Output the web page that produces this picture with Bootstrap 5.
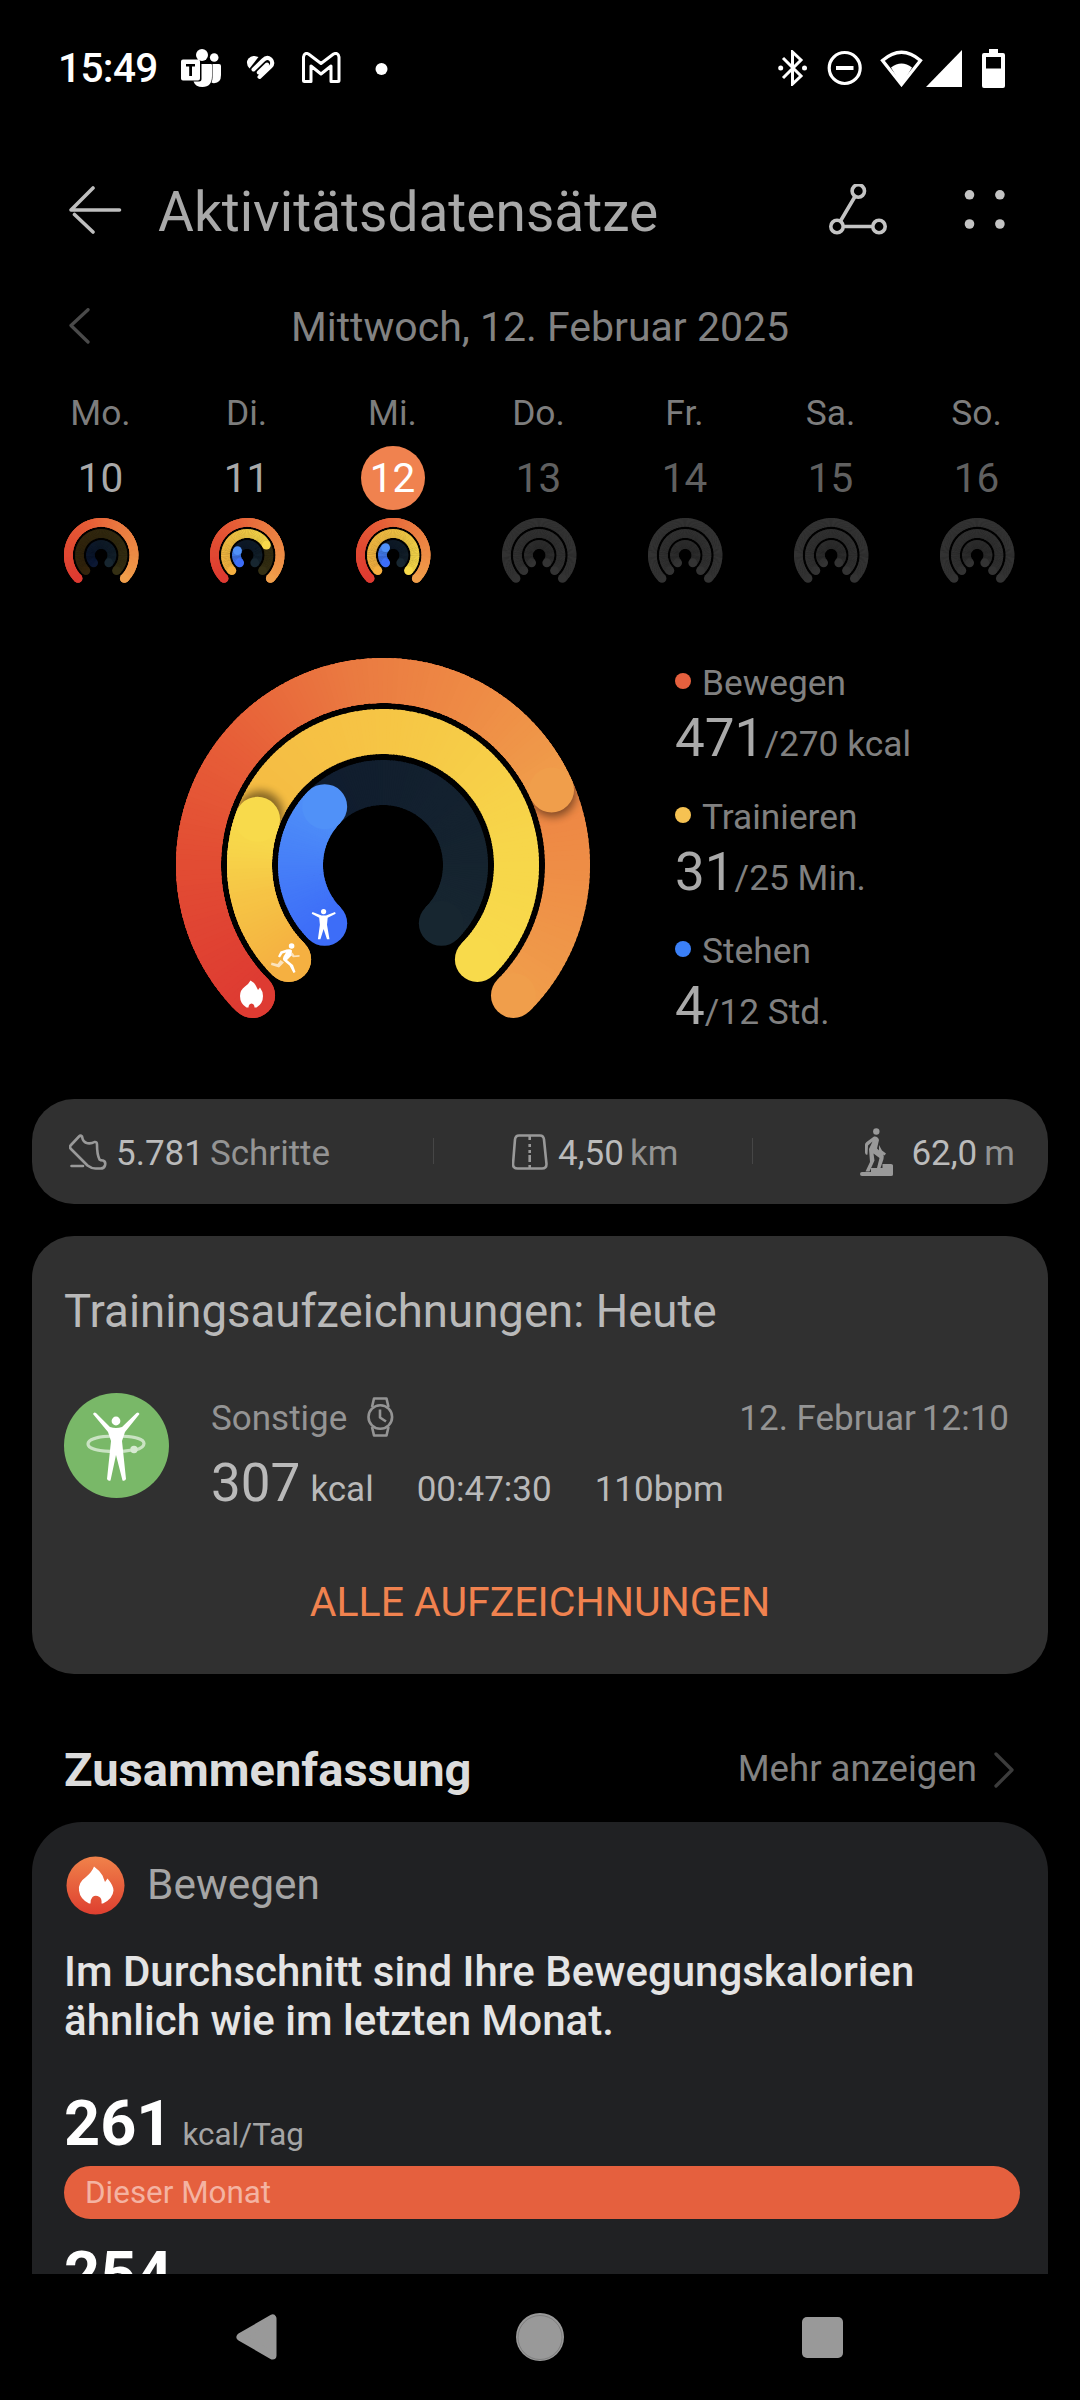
<!DOCTYPE html>
<html lang="de">
<head>
<meta charset="utf-8">
<meta name="viewport" content="width=device-width, initial-scale=1">
<title>Aktivitätsdatensätze</title>
<link rel="stylesheet" href="https://cdn.jsdelivr.net/npm/bootstrap@5.3.0/dist/css/bootstrap.min.css">
<style>
  body { background:#000; color:#aaa; font-family:Roboto,"Noto Sans",sans-serif; height:2400px; overflow:hidden; font-size:35px; line-height:1; }
  svg { display:block; flex:none; }
  .statusbar { height:136px; padding-left:58px; padding-right:75px; }
  .clock { font-size:40.5px; font-weight:500; color:#fff; width:123px; letter-spacing:-.6px; white-space:nowrap; }
  .topbar { height:148px; padding-left:68px; padding-right:67px; }
  .topbar h1 { font-size:55px; font-weight:400; line-height:70px; color:#a9a9a9; margin:3px 0 0 36px; }
  .datebar { height:85px; padding-left:69px; padding-right:69px; }
  .datebar span { font-size:41px; color:#828282; margin-top:1px; }
  .week { margin-top:21px; padding-left:28px; padding-right:30px; }
  .weekday { height:46px; line-height:46px; font-size:35.4px; color:#7d7d7d; margin-right:1px; }
  .daynum { width:64px; height:64px; line-height:65px; font-size:40.5px; margin:10px 1px 8px 0; color:#a9a9a9; text-align:center; }
  .daynum.future { color:#606060; }
  .daynum.today { background:#f0824f; color:#fff; }
  .summary-rings { height:441px; margin-top:74px; padding-left:176px; }
  .legend { margin-left:85px; padding-top:5px; color:#808080; font-size:35.3px; }
  .legend-item { height:134px; }
  .legend-name { line-height:41px; height:40px; gap:11px; }
  .bullet { width:16px; height:16px; margin-top:-4px; }
  .legend-value { line-height:66px; margin-top:2px; white-space:nowrap; }
  .big-num { font-size:53px; color:#aaa; }
  .panel { background:#303030; border-radius:42px; margin:0 32px; }
  .stats { height:105px; color:#949494; }
  .stats b { font-weight:400; color:#bbb; }
  .stats span, .stats b { line-height:44px; margin-top:4px; }
  .stat-steps { width:401px; padding-left:37px; }
  .stat-dist { width:319px; padding-left:78px; }
  .stat-climb { padding-right:33px; }
  .rule { width:1px; height:26px; background:#464646; margin-top:-1px; }
  .records { height:438px; margin-top:32px; padding:46px 32px 0; }
  .records h2 { font-size:45.6px; font-weight:400; line-height:60px; color:#b9b9b9; margin:0 0 51px; }
  .rec-line { height:44px; line-height:44px; margin-top:4px; color:#949494; padding-right:7px; }
  .rec-values { height:66px; line-height:66px; margin-top:9px; color:#b9b9b9; white-space:nowrap; }
  .rec-values .big-num { color:#b9b9b9; }
  .all-link { font-size:41px; line-height:60px; color:#f0824f; margin-top:56px; text-decoration:none; }
  .section-head { height:148px; padding:43px 64px 0; }
  .section-head h2 { font-size:47.1px; font-weight:700; line-height:60px; color:#dcdcdc; margin:0; }
  .more { font-size:36.6px; color:#828282; }
  .move-card { background:#202123; height:452px; border-radius:50px 50px 0 0; margin:0 32px; padding:34px 28px 0 32px; overflow:hidden; }
  .move-title { font-size:42.4px; color:#a5a5a5; margin-left:22px; }
  .move-text { font-size:42px; font-weight:500; line-height:49px; color:#e4e4e4; margin:32px 0 44px; white-space:nowrap; }
  .avg { height:70px; line-height:70px; color:#a5a5a5; font-size:31.4px; }
  .avg strong { font-size:63px; font-weight:700; color:#fff; }
  .month-bar { height:53px; line-height:54px; background:#e5603e; color:#f4b3a2; font-size:31.4px; margin:7px 0 21px; padding-left:21px; border-radius:27px; }
  .navkeys { height:126px; padding-left:236px; padding-right:237px; }
</style>
</head>
<body>
<header class="statusbar d-flex align-items-center">
  <div class="clock">15:49</div>
  <svg width="40" height="40" viewBox="0 0 40 40" fill="#fff"><circle cx="21" cy="7" r="6"/><circle cx="33.2" cy="9.5" r="4.3"/><path d="M31.500 16h6.500q2 0 2 2v9q0 8-7 8.200-1.500 0-2.500-.6 1-2 1-5z"/><path d="M20.500 16h9.500q1 0 1 1v11q0 11-9.500 11-7 0-9-5.500h5.500q2.500 0 2.500-2.500z"/><path fill-rule="evenodd" d="M2 11.500h15q2 0 2 2v17q0 2-2 2H2q-2 0-2-2v-17q0-2 2-2zM5 16v2.600h3.200V28h2.800v-9.400h3V16z"/></svg>
  <svg style="margin-left:25px" width="31" height="28" viewBox="0 0 31 28"><path fill="#fff" d="M3.500 14.500q-4.500-5.500-1-10Q5 1.500 8.500 2l4 1z"/><path d="M7.500 15.500L17 6.200q4-4 7.500-1 3.500 3.800 0 7.500L13.500 23M12.800 18.500L21 10.500" fill="none" stroke="#fff" stroke-width="4" stroke-linecap="round"/></svg>
  <svg style="margin-left:25px" width="39" height="32" viewBox="0 0 39 32" fill="none" stroke="#fff" stroke-width="3" stroke-linejoin="round"><path d="M1.500 28.500V5q1-5 5-3L19 11.500 31.500 2q4.500-2 5.500 3v23.500q0 1-1 1h-7V14L19 22 9 14v15.500H2.500q-1 0-1-1z"/></svg>
  <svg style="margin-left:34px" width="13" height="13"><circle cx="6.500" cy="7" r="6" fill="#fff"/></svg>
  <div class="d-flex align-items-center ms-auto">
    <svg width="30" height="36" viewBox="0 0 30 36"><path d="M5 8l18 18-8.500 8V2L23 10 5 28" fill="none" stroke="#fff" stroke-width="3"/><circle cx="2.700" cy="18" r="2.500" fill="#fff"/><circle cx="26.500" cy="18" r="2.500" fill="#fff"/></svg>
    <svg style="margin-left:19px" width="36" height="36" fill="none" stroke="#fff"><circle cx="17.700" cy="18" r="15.500" stroke-width="3.200"/><path d="M9 18h17.500" stroke-width="4"/></svg>
    <svg style="margin-left:17px" width="44" height="38" viewBox="0 0 44 38"><path d="M2.500 11.500Q21.500-5 40.500 11.500L21.500 35.500z" fill="none" stroke="#fff" stroke-width="3.300"/><path d="M11 18.500q10.500-8 21 0L21.500 36z" fill="#fff"/></svg>
    <svg style="margin-left:2px" width="37" height="37"><path d="M36 0v37H0z" fill="#fff"/></svg>
    <svg style="margin-left:19px" width="23" height="39"><path fill="#fff" fill-rule="evenodd" d="M7 0h9v4h5q2 0 2 2v31q0 2-2 2H2q-2 0-2-2V6q0-2 2-2h5zM4 8v11.500h15V8z"/></svg>
  </div>
</header>

<nav class="topbar d-flex align-items-center">
  <svg width="54" height="48" viewBox="0 0 54 48" fill="none" stroke="#bebebe" stroke-width="3.600" stroke-linecap="round" stroke-linejoin="round"><path d="M51.500 24H3L25 2M6.500 28.500L25 46"/></svg>
  <h1>Aktivitätsdatensätze</h1>
  <svg class="ms-auto" width="58" height="52" viewBox="828.500 184 58 52" fill="none" stroke="#c4c4c4" stroke-width="3.600"><circle cx="857.800" cy="191" r="6.200"/><circle cx="836.500" cy="226.500" r="6.200"/><circle cx="878.500" cy="226.500" r="6.200"/><path d="M854.500 196.500L840 221M843 226.500h29"/></svg>
  <svg style="margin-left:77px" width="49" height="40" viewBox="963.500 190 49 40" fill="#c4c4c4"><circle cx="969" cy="194.800" r="4.800"/><circle cx="999.400" cy="194.800" r="4.800"/><circle cx="969" cy="224" r="4.800"/><circle cx="999.400" cy="224" r="4.800"/></svg>
</nav>

<div class="datebar d-flex align-items-center justify-content-between">
  <svg width="21" height="38" fill="none" stroke="#4a4a4a" stroke-width="3.300" stroke-linecap="round" stroke-linejoin="round"><path d="M19 1.700L2 17.500 19 34"/></svg>
  <span>Mittwoch, 12. Februar 2025</span>
  <svg width="21" height="38"></svg>
</div>

<div class="week d-flex">
  <div class="col d-flex flex-column align-items-center"><div class="weekday">Mo.</div><div class="daynum">10</div><svg class="mini" width="75" height="66" data-p="1,0,0"></svg></div>
  <div class="col d-flex flex-column align-items-center"><div class="weekday">Di.</div><div class="daynum">11</div><svg class="mini" width="75" height="66" data-p="1,.73,.26"></svg></div>
  <div class="col d-flex flex-column align-items-center"><div class="weekday">Mi.</div><div class="daynum today rounded-circle">12</div><svg class="mini" width="75" height="66" data-p="1,1,.333"></svg></div>
  <div class="col d-flex flex-column align-items-center"><div class="weekday">Do.</div><div class="daynum future">13</div><svg class="mini" width="75" height="66"></svg></div>
  <div class="col d-flex flex-column align-items-center"><div class="weekday">Fr.</div><div class="daynum future">14</div><svg class="mini" width="75" height="66"></svg></div>
  <div class="col d-flex flex-column align-items-center"><div class="weekday">Sa.</div><div class="daynum future">15</div><svg class="mini" width="75" height="66"></svg></div>
  <div class="col d-flex flex-column align-items-center"><div class="weekday">So.</div><div class="daynum future">16</div><svg class="mini" width="75" height="66"></svg></div>
</div>

<section class="summary-rings d-flex align-items-start">
  <svg id="rings" width="414" height="362" viewBox="176 658 414 362">
    <defs>
      <filter id="soft" x="-50%" y="-50%" width="200%" height="200%"><feGaussianBlur stdDeviation="4.500"/></filter>
      <clipPath id="clip0"><path clip-rule="evenodd" d="M176 865a207 207 0 1 1 414 0a207 207 0 1 1-414 0zM221 865a162 162 0 1 0 324 0a162 162 0 1 0-324 0z"/></clipPath>
      <clipPath id="clip1"><path clip-rule="evenodd" d="M227 865a156 156 0 1 1 312 0a156 156 0 1 1-312 0zM272 865a111 111 0 1 0 222 0a111 111 0 1 0-222 0z"/></clipPath>
    </defs>
    <g id="arcs"></g>
    <g fill="#fff">
      <path d="M250.500 980.500q4 2 5.500 5.500l2 4 2-2.500q3 4 3 8.500 0 7.500-6.500 11.500h-2q0-3.500-3-4-3 .5-3 4h-2q-6.500-4-6.500-11.500 0-6 5-9.500 4-3 5.500-6z"/>
      <circle cx="291.600" cy="946" r="2.800"/>
      <path d="M286.500 949.500q4-1 5.500 1l-.5 5-4.500 4.500 6 5 2.500 7-2 1-4-7.500-6-5q-1-2 0-4l2.500-4-3.500 1-2.500 4-2-1 2.500-5z"/>
      <path opacity=".65" d="M292.500 952.500l2 3 5-.500v1.800l-6.500.5-2-2zM280.500 960l3.500 2.500-5 5-8-2.500.500-2.500 6 1.500z"/>
      <circle cx="323.600" cy="911.600" r="2.600"/>
      <path d="M312.500 912l9 3.500h4.500l9-3.500.7 1.800-8 4-.7 7 2.500 14.500h-2.500L323.600 929l-3.200 10.300h-2.500l2-14.500-.7-7-7.500-4z"/>
    </g>
  </svg>
  <div class="legend">
    <div class="legend-item"><div class="legend-name d-flex align-items-center"><i class="bullet rounded-circle" style="background:#e5603e"></i>Bewegen</div><div class="legend-value"><span class="big-num">471</span>/270 kcal</div></div>
    <div class="legend-item"><div class="legend-name d-flex align-items-center"><i class="bullet rounded-circle" style="background:#f6c252"></i>Trainieren</div><div class="legend-value"><span class="big-num">31</span>/25 Min.</div></div>
    <div class="legend-item"><div class="legend-name d-flex align-items-center"><i class="bullet rounded-circle" style="background:#3b80f7"></i>Stehen</div><div class="legend-value"><span class="big-num">4</span>/12 Std.</div></div>
  </div>
</section>

<section class="panel stats d-flex align-items-center">
  <div class="stat-steps d-flex align-items-center">
    <svg width="38" height="36" viewBox="0 0 38 36" fill="none" stroke="#999" stroke-width="2.600" stroke-linecap="round" stroke-linejoin="round"><path d="M10 2.500Q11.500 1 13 2.500q1 6 5.500 6.700 4 .6 7-1.200 2.500-.5 2.500 2.500 0 10 2.500 15 1 1 3.500 1 3 1 2 5-1 3-4.500 3h-5q-4 0-8-3L2 15q-2-2 0-4zM2.500 32H14"/></svg>
    <b style="margin-left:9px">5.781</b><span style="margin-left:6px">Schritte</span>
  </div>
  <div class="rule"></div>
  <div class="stat-dist d-flex align-items-center">
    <svg width="36" height="36" viewBox="0 0 36 36" fill="none" stroke="#999" stroke-width="2.600"><path d="M7 1.500h21q3.500 0 4 4L34.500 30q0 4.500-4.500 4.500H5.500Q1 34.500 1 30L3 5.500q.5-4 4-4z"/><path d="M17.700 2v4M17.700 10v3M17.700 16v3M17.700 21v7M17.700 31v4" /></svg>
    <b style="margin-left:10px">4,50</b><span style="margin-left:6px">km</span>
  </div>
  <div class="rule" style="margin-left:-1px"></div>
  <div class="stat-climb d-flex align-items-center ms-auto">
    <svg width="34" height="48" viewBox="0 0 34 48" fill="#999"><circle cx="16.300" cy="3.500" r="3.200"/><path d="M14 8.500q4-.5 5 3.500l-2 8.500 6 5.500q1.500 2 .5 5L20.500 40H17l2.500-10-6-4.500 1 7-5 11h-4L10 34l-1-13 3.500-7.500-4.500 4-.5 9q-2 1-2.500-2v-8q0-1.500 1.500-2.500zM19 17l3 5.500 4 3-1.500 2-5.500-4z"/><path d="M2 44h9v-4h11.500v-4H31q2 0 2 1.500v9q0 1.500-2 1.500H2q-2 0-2-2t2-2z"/></svg>
    <b style="margin-left:17px">62,0</b><span style="margin-left:7px">m</span>
  </div>
</section>

<section class="panel records">
  <h2>Trainingsaufzeichnungen: Heute</h2>
  <div class="d-flex align-items-start">
    <svg width="105" height="105"><circle cx="52.500" cy="52.500" r="52.500" fill="#79b868"/><path d="M71 57q9-2 9-6.500C80 45 67 43 52 43s-28 2.500-28 8 13 7.500 28 7.500q9 0 16-1.500" fill="none" stroke="#fff" stroke-opacity=".6" stroke-width="3.200"/><circle cx="70" cy="56.500" r="3.700" fill="#d7ead2"/><g fill="#fff"><circle cx="52" cy="28" r="4.400"/><path d="M29 21q1-2.500 3-1l14 14q6 2 12 0l14.500-14q2-1.500 3 1L61 39l-3 9 4 38q-1 2.500-3.500 1.500L52 62l-5.500 25.500Q44 88.500 43 86l4-38-3-9z"/></g></svg>
    <div class="flex-grow-1" style="margin-left:42px">
      <div class="rec-line d-flex align-items-center"><span>Sonstige</span>
        <svg style="margin-left:20px;margin-top:-4px" width="27" height="40" fill="none" stroke="#949494" stroke-width="2.600" stroke-linejoin="round"><circle cx="13.300" cy="20" r="11.800"/><path d="M5 10l2-8.500h12.500l2 8.500M5 30l2 8.500h12.500l2-8.500M13 12.500V20.500l6 4"/></svg>
        <span class="ms-auto">12. Februar</span><span style="margin-left:6px">12:10</span></div>
      <div class="rec-values"><span class="big-num">307</span><span style="margin-left:10px">kcal</span><span style="margin-left:43px">00:47:30</span><span style="margin-left:43px">110bpm</span></div>
    </div>
  </div>
  <a class="all-link d-block text-center">ALLE AUFZEICHNUNGEN</a>
</section>

<div class="section-head d-flex align-items-center justify-content-between">
  <h2>Zusammenfassung</h2>
  <div class="more d-flex align-items-center">Mehr anzeigen<svg style="margin-left:17px" width="22" height="36" fill="none" stroke="#3c3c3c" stroke-width="3.300" stroke-linecap="round" stroke-linejoin="round"><path d="M2 2l16 16L2 34"/></svg></div>
</div>

<section class="move-card">
  <div class="d-flex align-items-center">
    <svg style="margin-left:2px" width="59" height="59"><defs><linearGradient id="fl" x1="0" y1="0" x2="0" y2="1"><stop stop-color="#f0824a"/><stop offset="1" stop-color="#de3f30"/></linearGradient></defs><circle cx="29.500" cy="29.500" r="29" fill="url(#fl)"/><path fill="#fff" d="M28 10.500q5 3.500 8.500 9l2.500 6.500 2.500-3.500q6 7 6 12-.5 8-10.500 13h-1.500q.5-5-2-6.500-4-2.500-7 0-2 2-2 6.500H23q-9-4.500-10-13-1-8 7-13.500 6-5 8-10.500z"/></svg>
    <span class="move-title">Bewegen</span>
  </div>
  <p class="move-text">Im Durchschnitt sind Ihre Bewegungskalorien<br>ähnlich wie im letzten Monat.</p>
  <div class="avg"><strong>261</strong><span style="margin-left:10px">kcal/Tag</span></div>
  <div class="month-bar">Dieser Monat</div>
  <div class="avg"><strong>254</strong></div>
</section>

<footer class="navkeys d-flex align-items-center justify-content-between">
  <svg width="41" height="46" fill="#999" stroke="#999" stroke-width="8" stroke-linejoin="round"><path d="M4.500 23L36.500 4.500v37z"/></svg>
  <svg width="48" height="48"><circle cx="24" cy="24" r="24" fill="#999"/><circle cx="24" cy="24.500" r="22" fill="none" stroke="#777" stroke-width=".8"/></svg>
  <svg width="41" height="41"><rect width="41" height="41" rx="5" fill="#999"/></svg>
</footer>

<script src="https://cdn.jsdelivr.net/npm/bootstrap@5.3.0/dist/js/bootstrap.bundle.min.js"></script>
<script>
  // Activity rings: 270 degree arcs opening at the bottom, coloured along their length
  const RED = [[0,'#de3b32'],[.22,'#e24c33'],[.42,'#e75f38'],[.62,'#ea7a41'],[.8,'#ee8a45'],[1,'#f09e4b']];
  const YEL = [[0,'#f5b041'],[.25,'#f5bb43'],[.5,'#f6c545'],[.8,'#f7d64a'],[1,'#f8da4b']];
  const BLU = [[0,'#3d6df8'],[1,'#5091f8']];
  const DYEL = [[0,'#33240c'],[1,'#353014']], DBLU = [[0,'#0c1833'],[.45,'#111e2e'],[1,'#172630']];
  const GREY = [[0,'#333'],[1,'#333']];
  const rgb = h => { h = h.slice(1); if (h.length === 3) h = [...h].map(c => c + c).join(''); return [0,2,4].map(i => parseInt(h.substr(i,2),16)); };
  function mix(st, t) {
    let i = 1; while (i < st.length - 1 && st[i][0] < t) i++;
    const [a,ca] = st[i-1], [b,cb] = st[i], k = (t-a)/(b-a), x = rgb(ca), y = rgb(cb);
    return 'rgb(' + x.map((v,j) => Math.round(v + (y[j]-v)*k)).join(',') + ')';
  }
  const pt = (cx,cy,r,d) => { const a = (135 + d)*Math.PI/180; return (cx + r*Math.cos(a)).toFixed(2) + ' ' + (cy + r*Math.sin(a)).toFixed(2); };
  function arc(cx, cy, r, w, sweep, st) {
    let s = '';
    const cap = (d,c) => `<path d="M${pt(cx,cy,r,d)}h.01" stroke="${c}" stroke-width="${w}" stroke-linecap="round"/>`;
    s += cap(0, mix(st,0));
    for (let d = 0; d < sweep; d += 1.5)
      s += `<path d="M${pt(cx,cy,r,d)}A${r} ${r} 0 0 1 ${pt(cx,cy,r,Math.min(d+2.2,sweep))}" stroke="${mix(st,d/sweep)}" stroke-width="${w}" fill="none"/>`;
    return s + cap(sweep, mix(st,1));
  }
  const shade = (r,d,n) => { const [x,y] = pt(383,866,r,d).split(' '); return `<g clip-path="url(#clip${n})"><circle cx="${x}" cy="${y}" r="23" fill="#000" opacity=".45" filter="url(#soft)"/></g>`; };
  document.getElementById('arcs').innerHTML =
    arc(383,865,184.5,45,270,RED) + shade(184.5,202,0) + arc(383,865,184.5,45,201,RED) +
    arc(383,865,133.5,45,270,YEL) + shade(133.5,68,1) + arc(383,865,133.5,45,65,YEL) +
    arc(383,865,82.5,45,270,DBLU) + arc(383,865,82.5,45,90,BLU);
  document.querySelectorAll('.mini').forEach(m => {
    const p = m.dataset.p ? m.dataset.p.split(',').map(Number) : null;
    m.innerHTML = [32.8,21.7,10.7].map((r,i) => {
      let s = arc(37.2,37.2,r,8.8,270, p ? [RED,DYEL,DBLU][i] : GREY);
      if (p && p[i] > 0) s += arc(37.2,37.2,r,8.8,270*p[i],[RED,YEL,BLU][i]);
      return s;
    }).join('');
  });
</script>
</body>
</html>
